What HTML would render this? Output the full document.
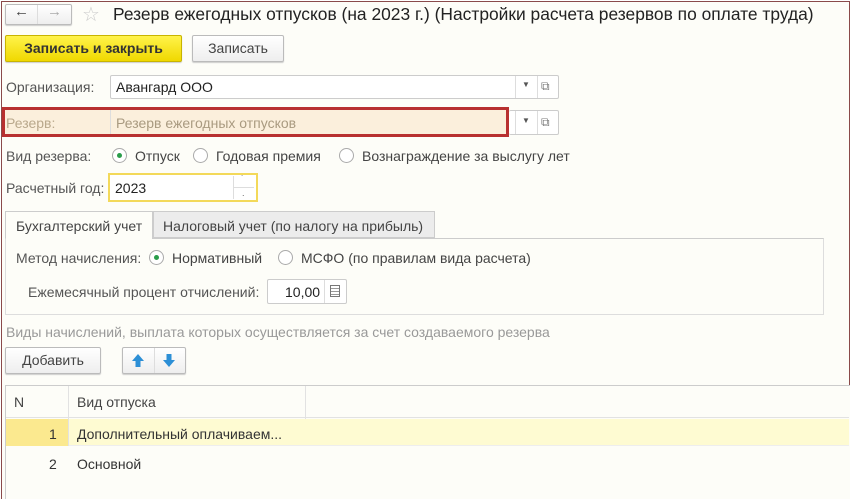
<!DOCTYPE html>
<html><head><meta charset="utf-8"><style>
*{box-sizing:border-box;margin:0;padding:0}
body{width:854px;height:499px;background:#fff;font-family:"Liberation Sans",sans-serif;font-size:14px;color:#333;position:relative;overflow:hidden}
.frame{position:absolute;left:1px;top:1px;width:849px;height:498px;border:1px solid #8a4a4a;border-bottom:none;background:#fdfdf8}
.a{position:absolute;white-space:nowrap}
.lbl{color:#555}
.inp{position:absolute;background:#fff;border:1px solid #ccc;border-radius:2px}
.btn{position:absolute;border:1px solid #bbb;border-radius:2px;background:linear-gradient(#fff,#eee);box-shadow:0 1px 1px #ccc;text-align:center;color:#444}
.radio{position:absolute;width:15px;height:15px;border:1px solid #aaa;border-radius:50%;background:#fff}
.radio.on::after{content:"";position:absolute;left:4px;top:4px;width:5px;height:5px;border-radius:50%;background:#2a9d4a}
</style></head><body>
<div class="frame"></div>
<!-- nav -->
<div class="btn" style="left:5px;top:4px;width:67px;height:21px"></div>
<div class="a" style="left:37px;top:5px;width:1px;height:19px;background:#ddd"></div>
<div class="a" style="left:14px;top:3px;font-size:15px;color:#444">&#8592;</div>
<div class="a" style="left:47px;top:3px;font-size:15px;color:#aaa">&#8594;</div>
<div class="a" style="left:82px;top:2px;font-size:20px;color:#ccc">&#9734;</div>
<div class="a" style="left:113px;top:4px;font-size:17.4px;color:#222">Резерв ежегодных отпусков (на 2023 г.) (Настройки расчета резервов по оплате труда)</div>
<!-- buttons -->
<div class="btn" style="left:5px;top:35px;width:177px;height:27px;background:linear-gradient(#fff34a,#f0d800);border-color:#c8b400;font-weight:bold;color:#333;line-height:25px;font-size:14px">Записать и закрыть</div>
<div class="btn" style="left:192px;top:35px;width:92px;height:27px;line-height:25px">Записать</div>
<!-- org -->
<div class="a lbl" style="left:6px;top:79px">Организация:</div>
<div class="inp" style="left:110px;top:75px;width:449px;height:24px"></div>
<div class="a" style="left:116px;top:79px;color:#222">Авангард ООО</div>
<div class="a" style="left:515px;top:76px;width:1px;height:22px;background:#ddd"></div>
<div class="a" style="left:537px;top:76px;width:1px;height:22px;background:#ddd"></div>
<div class="a" style="left:522px;top:80px;font-size:8px;color:#555">&#9660;</div>
<div class="a" style="left:541px;top:79px;font-size:12px;color:#777">&#10697;</div>
<!-- reserve -->
<div class="a" style="left:2px;top:107px;width:507px;height:30px;border:3px solid #b83030;background:#fbefdc"></div>
<div class="a" style="left:110px;top:110px;width:1px;height:24px;background:#ddd"></div>
<div class="a" style="left:6px;top:115px;color:#b9a88c">Резерв:</div>
<div class="a" style="left:116px;top:115px;color:#a99a80">Резерв ежегодных отпусков</div>
<div class="inp" style="left:509px;top:110px;width:50px;height:25px;border-left:none"></div>
<div class="a" style="left:537px;top:111px;width:1px;height:23px;background:#ddd"></div>
<div class="a" style="left:515px;top:111px;width:1px;height:23px;background:#ddd"></div>
<div class="a" style="left:522px;top:116px;font-size:8px;color:#555">&#9660;</div>
<div class="a" style="left:541px;top:115px;font-size:12px;color:#777">&#10697;</div>
<!-- vid -->
<div class="a lbl" style="left:6px;top:148px">Вид резерва:</div>
<div class="radio on" style="left:112px;top:148px"></div><div class="a" style="left:135px;top:148px;color:#444">Отпуск</div>
<div class="radio" style="left:193px;top:148px"></div><div class="a" style="left:216px;top:148px;color:#444">Годовая премия</div>
<div class="radio" style="left:339px;top:148px"></div><div class="a" style="left:362px;top:148px;color:#444">Вознаграждение за выслугу лет</div>
<!-- year -->
<div class="a lbl" style="left:6px;top:180px">Расчетный год:</div>
<div class="a" style="left:108px;top:173px;width:150px;height:29px;border:2px solid #f3d95a;background:#fff"></div>
<div class="a" style="left:115px;top:180px;color:#222">2023</div>
<div class="a" style="left:233px;top:176px;width:1px;height:23px;background:#ddd"></div>
<div class="a" style="left:234px;top:187px;width:20px;height:1px;background:#ddd"></div>
<div class="a" style="left:241px;top:174px;font-size:9px;color:#666">&#729;</div>
<div class="a" style="left:242px;top:188px;font-size:9px;color:#666">.</div>
<!-- tabs -->
<div class="a" style="left:5px;top:211px;width:148px;height:28px;border:1px solid #ccc;border-bottom:none;background:#fdfdf8"></div>
<div class="a" style="left:16px;top:218px;color:#444">Бухгалтерский учет</div>
<div class="a" style="left:153px;top:211px;width:282px;height:27px;border:1px solid #ccc;background:#ececec"></div>
<div class="a" style="left:163px;top:218px;color:#444">Налоговый учет (по налогу на прибыль)</div>
<div class="a" style="left:5px;top:238px;width:819px;height:77px;border:1px solid #ddd;border-top:1px solid #ccc"></div>
<div class="a" style="left:6px;top:238px;width:146px;height:2px;background:#fdfdf8"></div>
<div class="a lbl" style="left:16px;top:250px">Метод начисления:</div>
<div class="radio on" style="left:149px;top:250px"></div><div class="a" style="left:172px;top:250px;color:#444">Нормативный</div>
<div class="radio" style="left:278px;top:250px"></div><div class="a" style="left:301px;top:250px;color:#444">МСФО (по правилам вида расчета)</div>
<div class="a lbl" style="left:28px;top:284px">Ежемесячный процент отчислений:</div>
<div class="inp" style="left:267px;top:279px;width:80px;height:25px"></div>
<div class="a" style="left:285px;top:284px;color:#222">10,00</div>
<div class="a" style="left:324px;top:280px;width:1px;height:23px;background:#ddd"></div>
<div class="a" style="left:330px;top:285px;width:10px;height:12px;border:1px solid #777;background:repeating-linear-gradient(#fff 0 2px,#999 2px 3px)"></div>
<!-- list -->
<div class="a" style="left:6px;top:324px;color:#999">Виды начислений, выплата которых осуществляется за счет создаваемого резерва</div>
<div class="btn" style="left:5px;top:347px;width:96px;height:27px;line-height:25px">Добавить</div>
<div class="btn" style="left:122px;top:347px;width:64px;height:27px"></div>
<div class="a" style="left:154px;top:348px;width:1px;height:25px;background:#ddd"></div>
<svg class="a" style="left:131px;top:353px" width="14" height="15"><path d="M7 1 L13 8 H9.5 V14 H4.5 V8 H1Z" fill="#2c8fd6"/></svg>
<svg class="a" style="left:162px;top:353px" width="14" height="15"><path d="M7 14 L13 7 H9.5 V1 H4.5 V7 H1Z" fill="#2c8fd6"/></svg>
<!-- table -->
<div class="a" style="left:5px;top:385px;width:845px;height:114px;border-top:1px solid #ccc;border-left:1px solid #ccc;background:#fdfdf8"></div>
<div class="a" style="left:6px;top:386px;width:843px;height:32px;border-bottom:1px solid #e2e2e2"></div>
<div class="a" style="left:68px;top:386px;width:1px;height:60px;background:#e2e2e2"></div>
<div class="a" style="left:305px;top:386px;width:1px;height:60px;background:#e2e2e2"></div>
<div class="a" style="left:14px;top:394px;color:#444">N</div>
<div class="a" style="left:77px;top:394px;color:#444">Вид отпуска</div>
<div class="a" style="left:6px;top:419px;width:62px;height:27px;background:#fbe98f"></div>
<div class="a" style="left:69px;top:419px;width:780px;height:27px;background:#fefbd2;border-bottom:1px solid #eee"></div>
<div class="a" style="left:49px;top:426px;color:#333">1</div>
<div class="a" style="left:77px;top:426px;color:#333">Дополнительный оплачиваем...</div>
<div class="a" style="left:49px;top:456px;color:#333">2</div>
<div class="a" style="left:77px;top:456px;color:#333">Основной</div>
</body></html>
